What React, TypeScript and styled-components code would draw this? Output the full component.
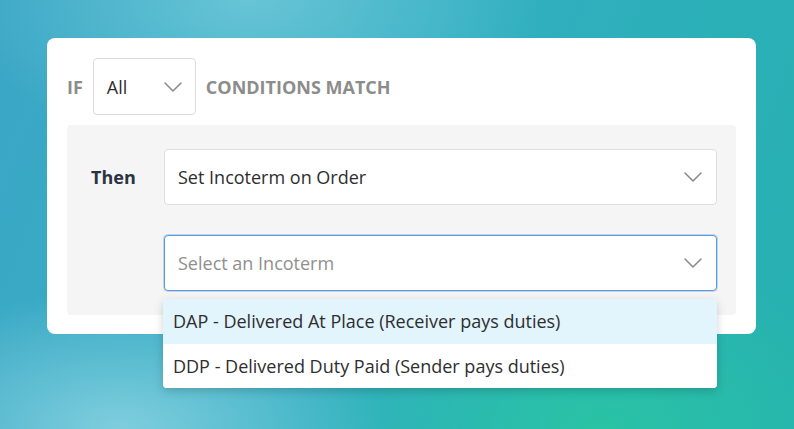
import React from "react";
import styled, { createGlobalStyle } from "styled-components";

const GlobalStyle = createGlobalStyle`
  html, body {
    margin: 0;
    padding: 0;
  }
  body {
    font-family: "Open Sans", "Liberation Sans", sans-serif;
  }
`;

type Option = {
  code: string;
  label: string;
};

const options: Array<Option> = [
  { code: "DAP", label: "Delivered At Place (Receiver pays duties)" },
  { code: "DDP", label: "Delivered Duty Paid (Sender pays duties)" },
];

function Chevron() {
  return (
    <svg width="18" height="10" viewBox="0 0 18 10" fill="none">
      <path
        d="M1 1l8 8 8-8"
        stroke="#8a8a8a"
        strokeWidth="1.6"
        strokeLinecap="round"
        strokeLinejoin="round"
      />
    </svg>
  );
}

function App() {
  return (
    <Page>
      <GlobalStyle />
      <Card>
        <IfRow>
          <Keyword>IF</Keyword>
          <SmallSelect>
            <span>All</span>
            <Chevron />
          </SmallSelect>
          <Keyword>CONDITIONS MATCH</Keyword>
        </IfRow>
        <Panel>
          <ThenRow>
            <ThenLabel>Then</ThenLabel>
            <Select>
              <SelectText>Set Incoterm on Order</SelectText>
              <Chevron />
            </Select>
          </ThenRow>
          <ThenRow>
            <Spacer />
            <SelectWrap>
              <Select focused>
                <SelectText placeholder>Select an Incoterm</SelectText>
                <Chevron />
              </Select>
              <Menu>
                {options.map((o, i) => (
                  <MenuItem key={o.code} active={i === 0}>
                    {o.code} - {o.label}
                  </MenuItem>
                ))}
              </Menu>
            </SelectWrap>
          </ThenRow>
        </Panel>
      </Card>
    </Page>
  );
}

export default App;

export const Page = styled.div`
  width: 794px;
  height: 429px;
  overflow: hidden;
  box-sizing: border-box;
  padding: 38px 38px 0 47px;
  background:
    radial-gradient(ellipse 420px 220px at 250px 0px, rgba(120, 205, 220, 0.75), transparent 70%),
    radial-gradient(ellipse 380px 200px at 120px 429px, rgba(140, 212, 226, 0.85), transparent 70%),
    radial-gradient(ellipse 420px 260px at 600px 429px, rgba(40, 200, 160, 0.8), transparent 70%),
    linear-gradient(110deg, #3ba6c6 0%, #33afc2 45%, #26b0b0 100%);
`;

export const Card = styled.div`
  width: 709px;
  height: 296px;
  box-sizing: border-box;
  background: #fff;
  border-radius: 8px;
  padding: 20px;
  display: flex;
  flex-direction: column;
  gap: 10px;
`;

export const IfRow = styled.div`
  display: flex;
  align-items: center;
  gap: 10px;
`;

export const Keyword = styled.span`
  font-size: 18px;
  font-weight: 700;
  color: #8c8c8c;
`;

export const SmallSelect = styled.div`
  width: 103px;
  height: 57px;
  box-sizing: border-box;
  border: 1px solid #dcdcdc;
  border-radius: 4px;
  display: flex;
  align-items: center;
  justify-content: space-between;
  padding: 0 13px 0 13px;
  font-size: 18px;
  color: #2e2e2e;
`;

export const Panel = styled.div`
  flex: 1;
  background: #f5f5f5;
  border-radius: 4px;
  padding: 24px 19px 24px 24px;
  display: flex;
  flex-direction: column;
  gap: 30px;
`;

export const ThenRow = styled.div`
  display: flex;
  align-items: center;
`;

export const ThenLabel = styled.span`
  width: 73px;
  flex: none;
  font-size: 18px;
  font-weight: 700;
  color: #2a3343;
`;

export const Spacer = styled.div`
  width: 73px;
  flex: none;
`;

export const SelectWrap = styled.div`
  position: relative;
  flex: 1;
`;

export const Select = styled.div<{ focused?: boolean }>`
  flex: 1;
  height: 56px;
  box-sizing: border-box;
  background: #fff;
  border: 1px solid ${(p) => (p.focused ? "#5b9bdc" : "#dedede")};
  box-shadow: ${(p) => (p.focused ? "0 0 0 1px rgba(91, 155, 220, 0.35)" : "none")};
  border-radius: 4px;
  display: flex;
  align-items: center;
  justify-content: space-between;
  padding: 0 14px 0 13px;
`;

export const SelectText = styled.span<{ placeholder?: boolean }>`
  font-size: 18px;
  color: ${(p) => (p.placeholder ? "#8f8f8f" : "#2e2e2e")};
`;

export const Menu = styled.div`
  position: absolute;
  top: 64px;
  left: -1px;
  right: 0;
  background: #fff;
  border-radius: 4px;
  overflow: hidden;
  box-shadow: 0 3px 10px rgba(0, 0, 0, 0.18);
`;

export const MenuItem = styled.div<{ active?: boolean }>`
  height: 44.5px;
  display: flex;
  align-items: center;
  padding: 0 10px;
  font-size: 18px;
  color: #2e2e2e;
  background: ${(p) => (p.active ? "#e2f4fc" : "#fff")};
`;
